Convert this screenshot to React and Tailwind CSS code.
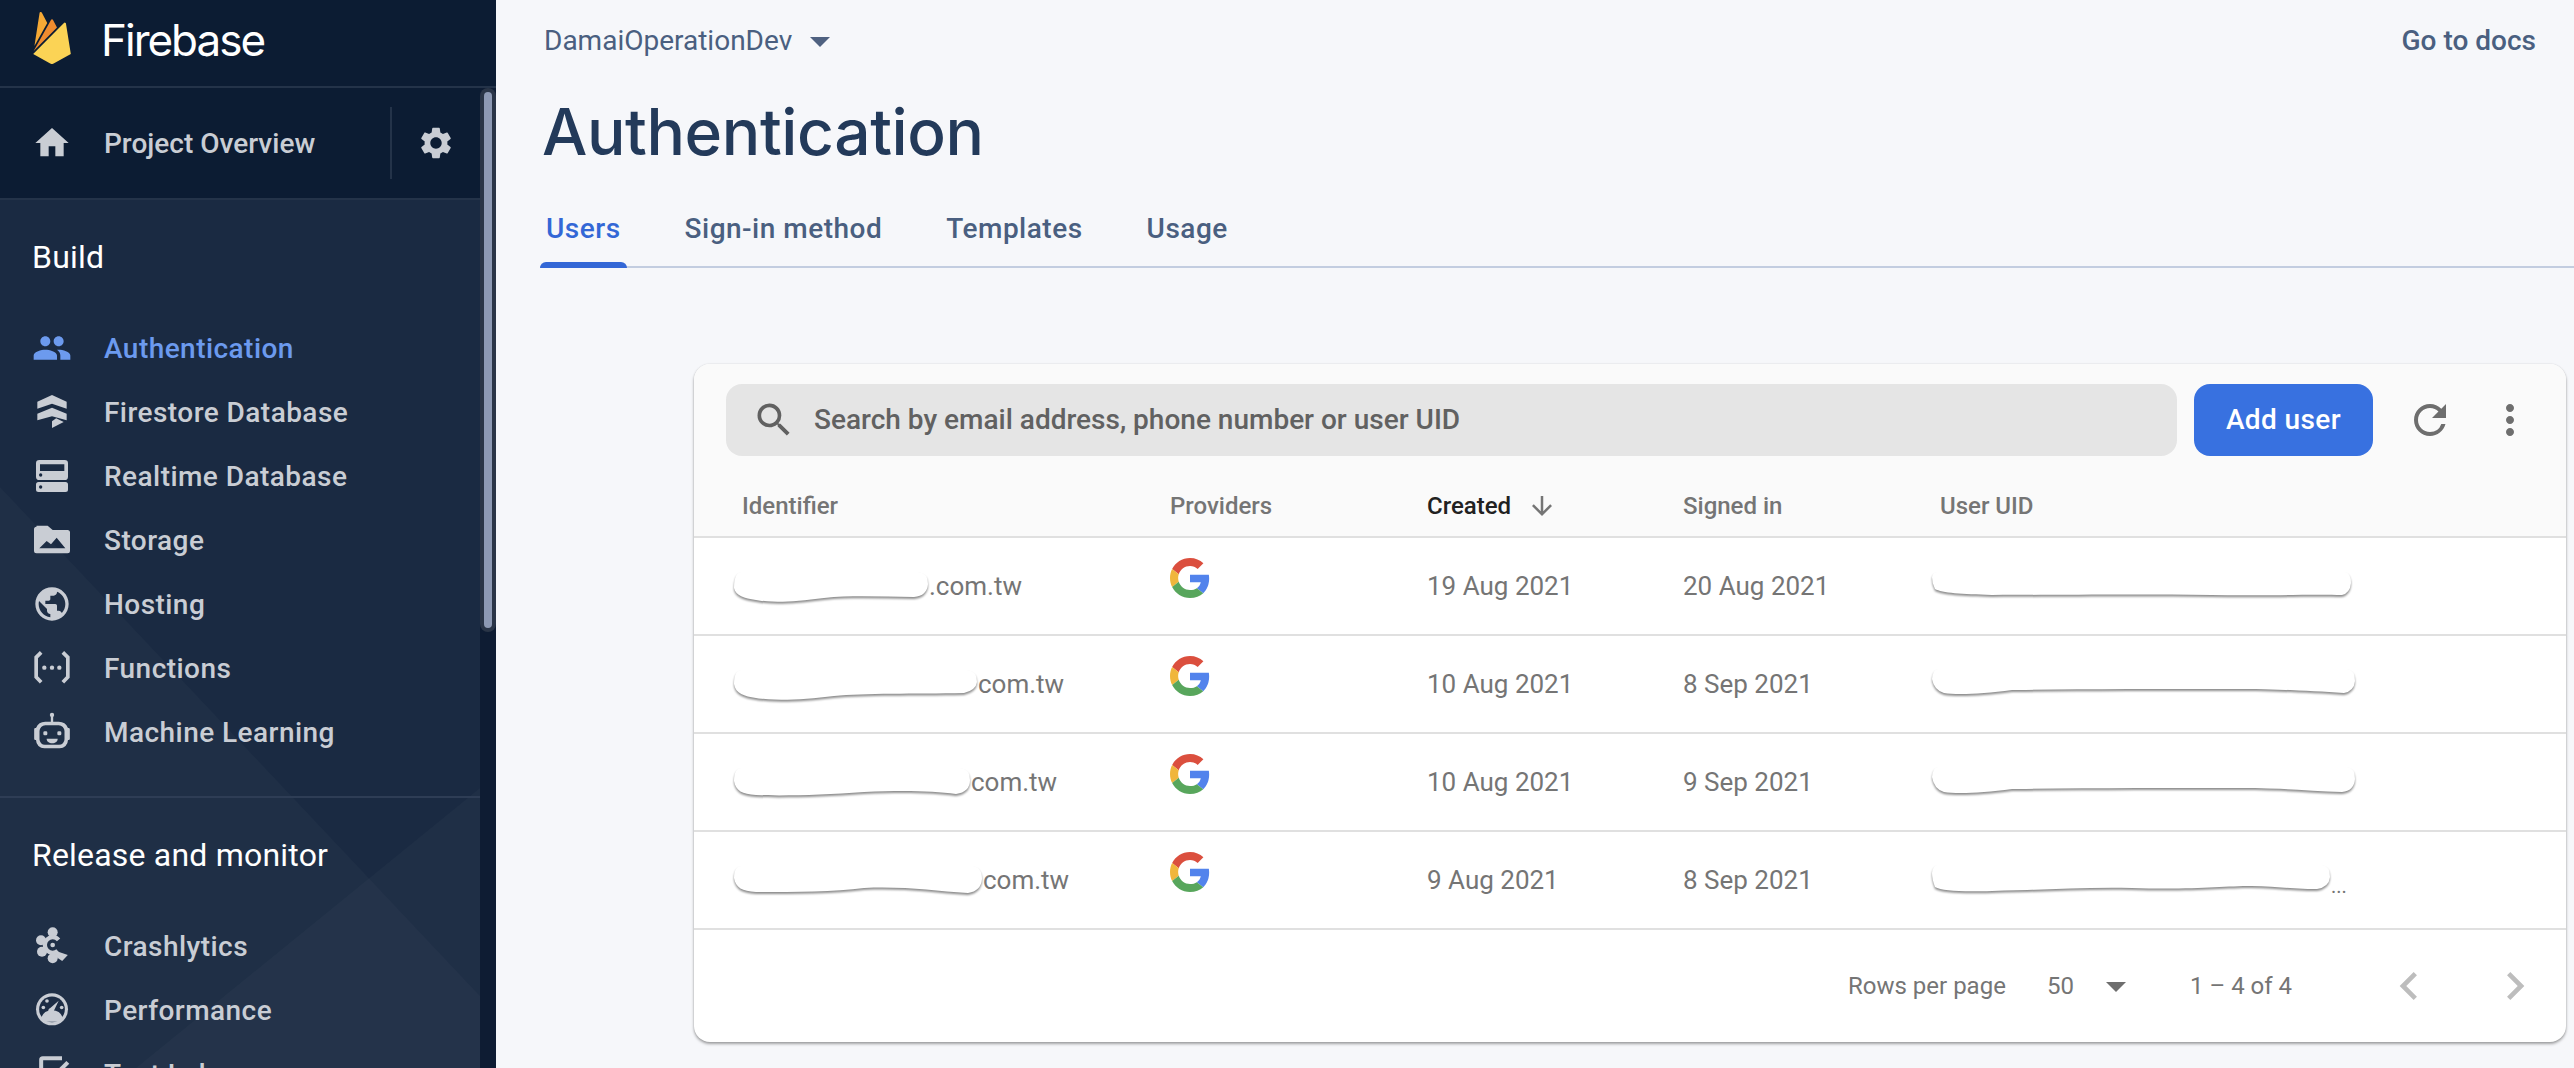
import {
  MdHome,
  MdSettings,
  MdPeople,
  MdPublic,
  MdRefresh,
  MdMoreVert,
  MdSearch,
  MdArrowDownward,
  MdArrowDropDown,
  MdChevronLeft,
  MdChevronRight,
} from "react-icons/md";

function FirebaseLogo() {
  return (
    <svg viewBox="0 0 24 24" className="w-[52px] h-[52px] shrink-0">
      <path fill="#F6A935" d="M3.89 15.672 6.255.461A.542.542 0 0 1 7.27.288l2.543 4.771z" />
      <path fill="#EE8B2F" d="M14.3 7.147l-1.82-3.482a.542.542 0 0 0-.96 0L3.53 17.984z" />
      <path fill="#FBD355" d="M20.684 19.364l-2.25-14a.54.54 0 0 0-.919-.295L3.316 19.365l7.856 4.427a1.621 1.621 0 0 0 1.588 0z" />
    </svg>
  );
}

function GoogleLogo() {
  return (
    <svg viewBox="0 0 48 48" className="w-[40px] h-[40px] -mt-4">
      <path fill="#DB4F3E" d="M24 9.5c3.54 0 6.71 1.22 9.21 3.6l6.85-6.85C35.9 2.38 30.47 0 24 0 14.62 0 6.51 5.38 2.56 13.22l7.98 6.19C12.43 13.72 17.74 9.5 24 9.5z" />
      <path fill="#5283EC" d="M46.98 24.55c0-1.57-.15-3.09-.38-4.55H24v9.02h12.94c-.58 2.96-2.26 5.48-4.78 7.18l7.73 6c4.51-4.18 7.09-10.36 7.09-17.65z" />
      <path fill="#F0B63C" d="M10.53 28.59c-.48-1.45-.76-2.99-.76-4.59s.27-3.14.76-4.59l-7.98-6.19C.92 16.46 0 20.12 0 24c0 3.88.92 7.54 2.56 10.78l7.97-6.19z" />
      <path fill="#58A65C" d="M24 48c6.48 0 11.93-2.13 15.89-5.81l-7.73-6c-2.15 1.45-4.92 2.3-8.16 2.3-6.26 0-11.57-4.22-13.47-9.91l-7.98 6.19C6.51 42.62 14.62 48 24 48z" />
    </svg>
  );
}

const svgCls = "w-[40px] h-[40px]";

function FirestoreIcon() {
  return (
    <svg viewBox="0 0 24 24" className={svgCls} fill="currentColor">
      <path d="M12 1.800l8.800 4v4.200L12 7 3.200 10V5.800z" />
      <path d="M12 9.500l8.800 3.500v4l-8.800-2.400L3.200 17v-4z" />
      <path d="M12 17.500l2.500-1.700 4.500 2.200-7 3.600z" />
    </svg>
  );
}

function RealtimeIcon() {
  return (
    <svg viewBox="0 0 24 24" className={svgCls} fill="currentColor">
      <path fillRule="evenodd" d="M4.400 2.400h15.200a2 2 0 0 1 2 2v8a2 2 0 0 1-2 2H4.400a2 2 0 0 1-2-2v-8a2 2 0 0 1 2-2zM4.800 5v4h14.600V5zM4.200 11.400a1 1 0 1 0 2 0 1 1 0 0 0-2 0z" />
      <path fillRule="evenodd" d="M3.900 15.600h16.200a1.500 1.500 0 0 1 1.500 1.500v3a1.500 1.500 0 0 1-1.500 1.500H3.900a1.500 1.500 0 0 1-1.500-1.500v-3a1.500 1.500 0 0 1 1.500-1.500zM4.200 18.600a1 1 0 1 0 2 0 1 1 0 0 0-2 0z" />
    </svg>
  );
}

function StorageIcon() {
  return (
    <svg viewBox="0 0 24 24" className={svgCls} fill="currentColor">
      <path fillRule="evenodd" d="M2.700 3.400h6.700l3 2.600h8.900a1.500 1.500 0 0 1 1.500 1.500v11a1.500 1.500 0 0 1-1.500 1.500H2.700a1.500 1.500 0 0 1-1.500-1.500v-13a1.500 1.500 0 0 1 1.500-1.500zM4.400 17H20l-5.200-6.400-3.400 4-2.600-2z" />
    </svg>
  );
}

function FunctionsIcon() {
  return (
    <svg viewBox="0 0 24 24" className={svgCls} fill="none" stroke="currentColor" strokeWidth="2.200">
      <path d="M5.500 2.600 2.500 5.600v11.800l3 3.200" />
      <path d="M18.500 2.600l3 3v11.800l-3 3.200" />
      <circle cx="7.400" cy="11.800" r="1.300" fill="currentColor" stroke="none" />
      <circle cx="12" cy="11.800" r="1.300" fill="currentColor" stroke="none" />
      <circle cx="16.400" cy="11.800" r="1.300" fill="currentColor" stroke="none" />
    </svg>
  );
}

function MlIcon() {
  return (
    <svg viewBox="0 0 24 24" className={svgCls} fill="currentColor">
      <circle cx="12" cy="1.800" r="1.300" />
      <rect x="11.300" y="2" width="1.400" height="4" />
      <path fillRule="evenodd" d="M8 5.800h8a6 6 0 0 1 5.600 3.800h.300a.800.800 0 0 1 .800.800v5.600a.800.800 0 0 1-.800.800h-.300V16.800a5 5 0 0 1-5 5H7.400a5 5 0 0 1-5-5v.000H2.100a.800.800 0 0 1-.800-.800v-5.600a.800.800 0 0 1 .800-.800h.300A6 6 0 0 1 8 5.800zM8 7.900a3.500 3.500 0 0 0-3.500 3.500v5a3.300 3.300 0 0 0 3.300 3.300h8.400a3.300 3.300 0 0 0 3.300-3.300v-5A3.500 3.500 0 0 0 16 7.900z" />
      <rect x="6.800" y="11.600" width="2.400" height="2.400" rx="0.800" />
      <rect x="15.200" y="11.600" width="2.400" height="2.400" rx="0.800" />
      <path d="M8.800 16.100h6.600c0 1.700-1.400 2.700-3.300 2.700s-3.300-1-3.300-2.700z" />
    </svg>
  );
}

function CrashlyticsIcon() {
  return (
    <svg viewBox="0 0 24 24" className={svgCls} fill="currentColor">
      <circle cx="12.400" cy="3.800" r="3" />
      <circle cx="5.400" cy="8.600" r="3" />
      <circle cx="6" cy="15.400" r="3" />
      <circle cx="12.400" cy="19.400" r="3" />
      <path d="M14.500 15l7 2.400-3.400 3.600-4.500-3z" />
      <circle cx="12.400" cy="11.400" r="4.700" fill="none" stroke="currentColor" strokeWidth="2.600" strokeDasharray="22 8" strokeDashoffset="-4" />
      <circle cx="12.400" cy="11.400" r="1.400" />
    </svg>
  );
}

function PerformanceIcon() {
  return (
    <svg viewBox="0 0 24 24" className={svgCls} fill="currentColor">
      <circle cx="12" cy="11.600" r="9.600" />
      <circle cx="12" cy="11.600" r="7.700" fill="#1c2c44" />
      <path d="M5.500 16.500a7 7 0 0 1 13 0l-1 2.500H6.500z" />
      <path d="M16 6.500l-2.800 5.800a1.700 1.700 0 1 1-2.400-1.400z" />
      <circle cx="6.800" cy="10.500" r="1.100" />
      <circle cx="9" cy="6.600" r="1.100" />
      <circle cx="17.800" cy="10.500" r="1.100" />
    </svg>
  );
}

function TestLabIcon() {
  return (
    <svg viewBox="0 0 24 24" className={svgCls} fill="none" stroke="currentColor" strokeWidth="2.400">
      <path d="M18 2.500H6.500a1 1 0 0 0-1 1V24" />
      <path d="M21.500 5l-7 7" />
    </svg>
  );
}

const icon = "w-[40px] h-[40px]";

const buildItems = [
  { label: "Authentication", Icon: () => <MdPeople className={icon} />, active: true },
  { label: "Firestore Database", Icon: FirestoreIcon },
  { label: "Realtime Database", Icon: RealtimeIcon },
  { label: "Storage", Icon: StorageIcon },
  { label: "Hosting", Icon: () => <MdPublic className={icon} /> },
  { label: "Functions", Icon: FunctionsIcon },
  { label: "Machine Learning", Icon: MlIcon },
];

const releaseItems = [
  { label: "Crashlytics", Icon: CrashlyticsIcon },
  { label: "Performance", Icon: PerformanceIcon },
  { label: "Test Lab", Icon: TestLabIcon },
];

function NavItem({ label, Icon, active }) {
  return (
    <div
      className={`h-[64px] shrink-0 flex items-center pl-[32px] gap-[32px] text-[28px] font-medium tracking-[0.45px] ${
        active ? "text-[#6c9aee]" : "text-[#c9cdd4]"
      }`}
    >
      <Icon />
      <span className="pt-[1px]">{label}</span>
    </div>
  );
}

function Sidebar() {
  return (
    <aside className="w-[496px] shrink-0 h-full flex flex-col bg-[#0c1c33] overflow-hidden">
      <div className="h-[88px] shrink-0 border-b-2 border-[#243349] flex items-start pl-[26px] pt-[12px] gap-[23px]">
        <FirebaseLogo />
        <span className="font-['Inter',sans-serif] text-[44px] leading-[52px] mt-[2px] tracking-[-2px] text-white">
          Firebase
        </span>
      </div>
      <div className="flex flex-1 min-h-0">
        <div className="relative w-[480px] shrink-0 flex flex-col bg-[#1a2a42]">
          <svg className="absolute left-0 top-0 w-[480px] h-[980px]" viewBox="0 0 480 980">
            <polygon points="0,399 480,908 480,980 0,980" fill="#ffffff" fillOpacity="0.025" />
            <polygon points="480,700 136,980 480,980" fill="#ffffff" fillOpacity="0.025" />
          </svg>
          <div className="relative flex flex-col">
            <div className="h-[112px] shrink-0 bg-[#0c1c33] border-b-2 border-[#243349] flex items-center pl-[32px] text-[#c9cdd4]">
              <MdHome className="w-[40px] h-[40px]" />
              <span className="ml-[32px] pt-[2px] text-[28px] font-medium flex-1">Project Overview</span>
              <div className="w-[2px] h-[72px] bg-[#243349]" />
              <div className="w-[88px] flex justify-center">
                <MdSettings className="w-[38px] h-[38px]" />
              </div>
            </div>
            <div className="pl-[32px] pt-[36px] pb-[38px] text-[32px] leading-[42px] text-white tracking-[0.2px]">Build</div>
            {buildItems.map((item) => (
              <NavItem key={item.label} {...item} />
            ))}
            <div className="mt-[32px] border-t-2 border-[#2e3d55] pl-[32px] pt-[36px] pb-[38px] text-[32px] leading-[42px] text-white tracking-[0.2px]">
              Release and monitor
            </div>
            {releaseItems.map((item) => (
              <NavItem key={item.label} {...item} />
            ))}
          </div>
        </div>
        <div className="w-[16px] shrink-0 bg-[#0e1c33]">
          <div className="h-[544px] bg-[#2a3547] rounded-full p-[4px]">
            <div className="h-full bg-[#8d99b3] rounded-full" />
          </div>
        </div>
      </div>
    </aside>
  );
}

function Blob({ w, d, className = "" }) {
  return (
    <svg
      viewBox={`0 0 ${w} 34`}
      width={w}
      height={34}
      className={`shrink-0 overflow-visible drop-shadow-[0_2px_1px_rgba(0,0,0,0.45)] ${className}`}
    >
      <path fill="#ffffff" d={d} />
    </svg>
  );
}

const rows = [
  {
    created: "19 Aug 2021",
    signed: "20 Aug 2021",
    idW: 194,
    idD: "M8 2H184Q194 3 194 14Q193 26 180 27C150 27 120 25 90 28C60 32 38 33 22 30C10 28 2 26 0 18Q0 2 8 2z",
    mail: ".com.tw",
    uidW: 419,
    uidD: "M6 3H413Q419 4 419 14Q418 24 410 26C380 25 330 27 280 26C200 25 120 26 60 26C30 25 10 24 3 20Q0 14 0 8Q1 3 6 3z",
  },
  {
    created: "10 Aug 2021",
    signed: "8 Sep 2021",
    idW: 243,
    idD: "M8 2H233Q243 3 243 14Q242 22 230 25C180 26 130 25 100 28C70 32 38 33 22 30C10 28 2 26 0 16Q0 2 8 2z",
    mail: "com.tw",
    uidW: 423,
    uidD: "M6 2H415Q423 3 423 14Q422 24 412 26C380 24 350 22 300 22C220 22 150 22 80 23C50 27 25 28 12 26Q2 23 0 12Q1 2 6 2z",
  },
  {
    created: "10 Aug 2021",
    signed: "9 Sep 2021",
    idW: 236,
    idD: "M8 2H226Q236 3 236 14Q236 26 222 28C200 25 170 24 130 26C90 29 50 30 22 29C8 28 2 25 0 15Q0 2 8 2z",
    mail: "com.tw",
    uidW: 423,
    uidD: "M6 2H415Q423 3 423 14Q422 26 410 27C380 26 350 23 310 23C230 23 160 23 80 24C50 28 25 29 12 27Q2 24 0 12Q1 2 6 2z",
  },
  {
    created: "9 Aug 2021",
    signed: "8 Sep 2021",
    idW: 248,
    idD: "M8 2H238Q248 3 248 15Q247 27 234 29C200 27 170 22 130 24C100 28 60 28 22 28C8 27 2 24 0 14Q0 2 8 2z",
    mail: "com.tw",
    uidW: 398,
    uidD: "M6 2H390Q398 3 398 14Q397 24 385 26C360 26 340 23 320 23C290 23 260 27 200 25C150 24 110 27 60 28C30 29 10 28 3 24Q0 16 0 10Q1 2 6 2z",
    dots: true,
  },
];

function UserRow({ row }) {
  return (
    <div className="h-[98px] border-b-2 border-[#e0e0e0] flex items-center text-[26px] text-[#757575]">
      <div className="w-[476px] pl-[48px] flex items-center">
        <Blob w={row.idW} d={row.idD} className="-ml-[8px] mt-[2px]" />
        <span className="ml-px">{row.mail}</span>
      </div>
      <div className="w-[257px] flex">
        <GoogleLogo />
      </div>
      <div className="w-[256px]">{row.created}</div>
      <div className="w-[257px]">{row.signed}</div>
      <div className="flex items-center -ml-[8px]">
        <Blob w={row.uidW} d={row.uidD} />
        {row.dots && <span className="ml-px mt-[12px] text-[20px] leading-none">...</span>}
      </div>
    </div>
  );
}

function UsersCard() {
  return (
    <div className="ml-[198px] mr-[8px] mt-[96px] h-[678px] rounded-[16px] bg-white shadow-[0_2px_3px_rgba(0,0,0,0.35),0_0_2px_rgba(0,0,0,0.12)] overflow-hidden">
      <div className="bg-[#fafafa] border-b-2 border-[#e0e0e0] h-[174px]">
        <div className="flex items-center pt-[20px] pl-[32px]">
          <div className="w-[1451px] h-[72px] rounded-[16px] bg-[#e5e5e5] flex items-center pl-[26px] text-[#616161]">
            <MdSearch className="w-[44px] h-[44px] shrink-0" />
            <span className="ml-[18px] text-[28px] font-medium">Search by email address, phone number or user UID</span>
          </div>
          <button className="ml-[17px] w-[179px] h-[72px] rounded-[16px] bg-[#3871e0] text-white text-[28px] font-medium tracking-[0.4px]">
            Add user
          </button>
          <MdRefresh className="ml-[33px] w-[48px] h-[48px] text-[#6e6e6e] shrink-0" />
          <MdMoreVert className="ml-[32px] w-[48px] h-[48px] text-[#6e6e6e] shrink-0" />
        </div>
        <div className="flex items-center h-[60px] mt-[20px] text-[24px] font-medium text-[#757575]">
          <div className="w-[476px] pl-[48px]">Identifier</div>
          <div className="w-[257px]">Providers</div>
          <div className="w-[256px] flex items-center text-[#212121]">
            Created
            <MdArrowDownward className="ml-[16px] w-[30px] h-[30px] text-[#757575]" />
          </div>
          <div className="w-[257px]">Signed in</div>
          <div>User UID</div>
        </div>
      </div>
      {rows.map((row) => (
        <UserRow key={row.uidW + row.idW} row={row} />
      ))}
      <div className="h-[112px] flex items-center text-[24px] text-[#757575]">
        <div className="ml-[1154px] w-[199px]">Rows per page</div>
        <div className="w-[49px]">50</div>
        <MdArrowDropDown className="w-[48px] h-[48px] -mx-[4px] text-[#6e6e6e]" />
        <div className="ml-[54px] w-[191px]">1 – 4 of 4</div>
        <MdChevronLeft className="w-[56px] h-[56px] text-[#bdbdbd]" />
        <MdChevronRight className="ml-[50px] w-[56px] h-[56px] text-[#bdbdbd]" />
      </div>
    </div>
  );
}

export default function App() {
  return (
    <div className="w-[2574px] h-[1068px] flex overflow-hidden bg-[#f6f7fa] font-['Roboto',sans-serif]">
      <Sidebar />
      <main className="flex-1 min-w-0">
        <div className="h-[82px] pl-[48px] pr-[38px] flex items-center justify-between text-[28px] text-[#4a5f80]">
          <div className="flex items-center">
            DamaiOperationDev
            <MdArrowDropDown className="ml-[4px] w-[48px] h-[48px] text-[#4f6180]" />
          </div>
          <span className="font-medium">Go to docs</span>
        </div>
        <h1 className="pl-[46px] pt-[2px] h-[98px] flex items-center font-['Inter',sans-serif] text-[64px] font-medium tracking-[-0.4px] text-[#233a5a]">
          Authentication
        </h1>
        <div className="ml-[44px] h-[88px] flex items-end gap-[52px] border-b-2 border-[#c3cde0] text-[28px] font-medium tracking-[0.5px] text-[#4a5f80]">
          <div className="relative h-full px-[6px] pt-[28px] text-[#3367d6]">
            Users
            <div className="absolute left-0 right-0 -bottom-[2px] h-[6px] rounded-t-[6px] bg-[#3367d6]" />
          </div>
          <div className="h-full px-[6px] pt-[28px]">Sign-in method</div>
          <div className="h-full px-[6px] pt-[28px]">Templates</div>
          <div className="h-full px-[6px] pt-[28px]">Usage</div>
        </div>
        <UsersCard />
      </main>
    </div>
  );
}
